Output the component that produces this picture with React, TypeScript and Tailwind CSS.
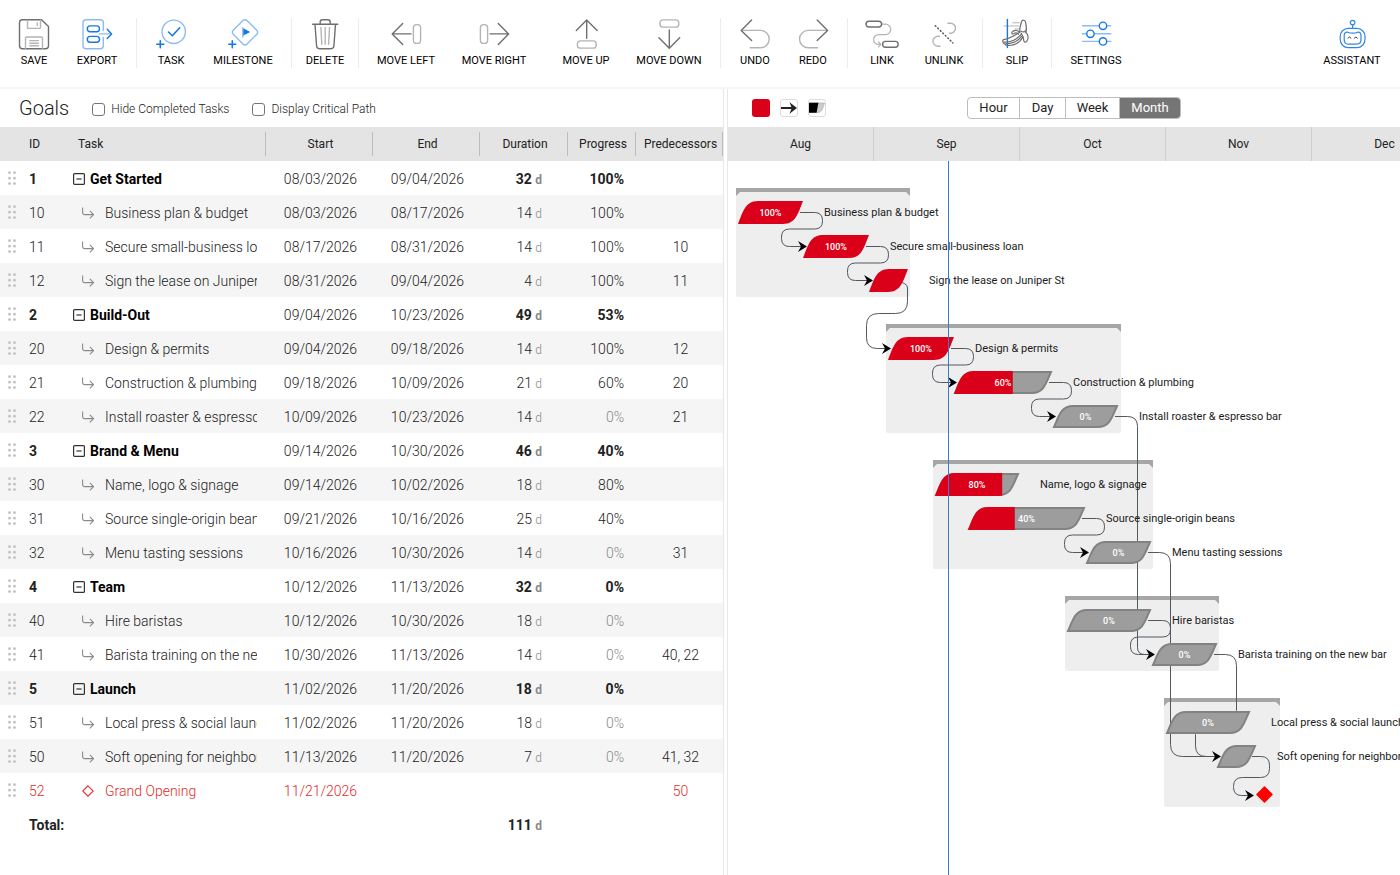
import React from 'react';

const BLUE = '#1479e6';
const LIGHT_BLUE = '#8dbbf5';
const DARK = '#6f6f6f';
const LIGHT = '#b4b4b4';

const ROW = 34;

// ---------- Toolbar icons ----------

const Icon: React.FC<{ children: React.ReactNode }> = ({ children }) => (
  <svg
    className="size-8 overflow-visible"
    viewBox="0 0 32 32"
    fill="none"
    strokeWidth="1.4"
    strokeLinecap="round"
    strokeLinejoin="round"
    aria-hidden="true"
  >
    {children}
  </svg>
);

const icons = {
  save: (
    <Icon>
      <path stroke={DARK} d="M4.5 1.8H23.5L30.5 8.5V27.8A3 3 0 0 1 27.5 30.8H4.5A3 3 0 0 1 1.5 27.8V4.8A3 3 0 0 1 4.5 1.8Z" />
      <path stroke={LIGHT} d="M9.5 2.2V9.4A1 1 0 0 0 10.5 10.4H21.5A1 1 0 0 0 22.5 9.4V2.2M19.3 5V7.4" />
      <path stroke={LIGHT} d="M7.5 30.4V20A1 1 0 0 1 8.5 19H23.5A1 1 0 0 1 24.5 20V30.4M11.8 22.6H20.4M11.8 25.2H20.4M11.8 27.8H20.4" />
    </Icon>
  ),
  exporting: (
    <Icon>
      <path stroke={LIGHT_BLUE} d="M22.3 12.5V4.8A3 3 0 0 0 19.3 1.8H5A3 3 0 0 0 2 4.8V27.8A3 3 0 0 0 5 30.8H19.3A3 3 0 0 0 22.3 27.8V19.5M18.5 15.9H29.5" />
      <rect stroke={BLUE} x="6.3" y="7.9" width="12.2" height="5.8" rx="2.9" />
      <rect stroke={BLUE} x="6.3" y="18.4" width="12.2" height="5.8" rx="2.9" />
      <path stroke={BLUE} d="M26.2 11.2L30.6 15.9L26.2 20.6" />
    </Icon>
  ),
  task: (
    <Icon>
      <circle stroke={LIGHT_BLUE} cx="18.7" cy="13.8" r="11.7" />
      <path stroke={BLUE} strokeWidth="1.6" d="M13.5 14L17.4 17.8L24.7 9.8M5.3 22.8V29.8M1.8 26.3H8.8" />
    </Icon>
  ),
  milestone: (
    <Icon>
      <path stroke={LIGHT_BLUE} d="M16 2.5Q18 0.8 20 2.5L29.8 12.3Q31.5 14.3 29.8 16.3L20 26.1Q18 27.8 16 26.1L6.2 16.3Q4.5 14.3 6.2 12.3Z" />
      <path stroke={LIGHT_BLUE} d="M15.8 9.6V19" />
      <path fill={BLUE} d="M16.3 10.2L23.2 13.9L16.3 17.4Z" />
      <path stroke={BLUE} strokeWidth="1.6" d="M5.3 22.8V29.8M1.8 26.3H8.8" />
    </Icon>
  ),
  trash: (
    <Icon>
      <path stroke={DARK} d="M3.6 6.3H28.8M11.2 6V4A2.3 2.3 0 0 1 13.5 1.8H18.9A2.3 2.3 0 0 1 21.2 4V6M6 6.5L7.6 28A3 3 0 0 0 10.5 30.7H22A3 3 0 0 0 24.9 28L26.5 6.5" />
      <path stroke={LIGHT} d="M11.9 9.5L12.8 26.3M16.2 9.5V26.3M20.5 9.5L19.6 26.3" />
    </Icon>
  ),
  left: (
    <Icon>
      <path stroke={DARK} d="M12.7 5.4L2.2 15.9L12.7 26.4M2.2 15.9H21" />
      <rect stroke={LIGHT} x="23.4" y="6.6" width="7.2" height="18.8" rx="3.2" />
    </Icon>
  ),
  right: (
    <Icon>
      <path stroke={DARK} d="M20.3 5.4L30.6 15.9L20.3 26.4M30.6 15.9H12" />
      <rect stroke={LIGHT} x="2.4" y="6.6" width="7.2" height="18.8" rx="3.2" />
    </Icon>
  ),
  up: (
    <Icon>
      <path stroke={DARK} d="M6.3 12.4L16.7 2L27.1 12.4M16.7 2V20.2" />
      <rect stroke={LIGHT} x="7.4" y="22.9" width="18.8" height="7.2" rx="3.2" />
    </Icon>
  ),
  down: (
    <Icon>
      <path stroke={DARK} d="M5.9 19.8L16.3 30.2L26.7 19.8M16.3 30.2V12" />
      <rect stroke={LIGHT} x="7" y="1.9" width="18.8" height="7.2" rx="3.2" />
    </Icon>
  ),
  undo: (
    <Icon>
      <path stroke={LIGHT} d="M3 12.4H21.5A8.7 8.7 0 0 1 21.5 29.8H11.2" />
      <path stroke={DARK} d="M12.6 2L2.2 12.4L12.6 22.6" />
    </Icon>
  ),
  redo: (
    <Icon>
      <path stroke={LIGHT} d="M29.8 12.4H11.2A8.7 8.7 0 0 0 11.2 29.8H20.6" />
      <path stroke={DARK} d="M20.2 2L30.6 12.4L20.2 22.6" />
    </Icon>
  ),
  link: (
    <Icon>
      <path stroke={LIGHT} strokeWidth="1.2" d="M16 6.2H19.5A5.2 5.2 0 0 1 19.5 16.6H12.5A4.9 4.9 0 0 0 12.5 26.4H14.6M12.6 24L15 26.4L12.6 28.8" />
      <rect stroke={DARK} x="0" y="3.2" width="15.6" height="5.8" rx="2.9" />
      <rect stroke={DARK} x="16.6" y="23.4" width="15.6" height="5.8" rx="2.9" />
    </Icon>
  ),
  unlink: (
    <Icon>
      <path stroke={LIGHT} d="M20 5.2H22.5A5 5 0 0 1 22.5 15.2H21.5M11.5 18.2H10A5 5 0 0 0 10 28.2H12" />
      <path stroke="#555" strokeWidth="1.5" strokeDasharray="0.8 2.7" d="M7.3 7.7L24.9 24.9" />
    </Icon>
  ),
  slip: (
    <Icon>
      <path stroke={LIGHT} strokeWidth="1" d="M11.8 4.8H18.5M2.8 8H17.5M14 11H18" />
      <path stroke={BLUE} d="M6.4 1.5V29.6" />
      <g stroke={DARK} strokeWidth="1.2">
        <path d="M18.8 13.5C18.2 9.5 20 6.5 20.6 3.4C21 1.8 24 1.8 24.4 3.6C25.2 7.5 26.2 10.5 24.8 14.6" />
        <path d="M20 13.2C21.6 14.2 23.4 14 24.8 12.8" />
        <path d="M18.8 14C15.5 16.5 9.5 20.6 2.4 21.6C1.6 22.4 1.8 24 2.6 25.2C4.2 26 4.4 26.6 5 27.2C12 27.8 18.5 25.5 21.8 19" />
        <path d="M3 24C10 24.4 16.5 21 20.6 15.8M5 25.6C11.5 25.8 17 23 20.6 18.4" />
        <path d="M18.8 14.2C16.5 12 13 11.8 11 14.2C10.4 15.4 11.2 16.4 12.6 15.8C14.4 14.6 16.4 15 17.4 16.2" />
        <path d="M24.8 14.4C27.4 16.5 28 20.5 25.6 23.6C24.6 24.6 23.2 24.2 22.8 22.8C22.6 20 21.8 17.6 20.2 15.4" />
      </g>
    </Icon>
  ),
  settings: (
    <Icon>
      <path stroke={LIGHT_BLUE} d="M2.5 7.8H30.8M2.5 15.8H30.8M2.5 23.4H30.8" />
      <g stroke={BLUE} fill="#fff">
        <circle cx="23" cy="7.8" r="3.7" />
        <circle cx="10.4" cy="15.8" r="3.7" />
        <circle cx="23" cy="23.4" r="3.7" />
      </g>
    </Icon>
  ),
  assistant: (
    <Icon>
      <g stroke="#2f86e4" strokeWidth="1.2">
        <circle cx="16.6" cy="4.6" r="2.3" />
        <path d="M16.6 7V10.4" />
        <rect x="4.2" y="10.4" width="24.8" height="19.2" rx="8" />
        <path d="M11.6 14.2C14 15.4 19.2 15.4 21.6 14.2C24.4 13.8 25 15.6 25 18V21.6C25 24.8 23.6 26.2 20.8 26.2H12.4C9.6 26.2 8.2 24.8 8.2 21.6V18C8.2 15.6 8.8 13.8 11.6 14.2Z" />
      </g>
      <path stroke="#444" strokeWidth="1" d="M12 20.2L13.5 19L15 20.2M18.4 20.2L19.9 19L21.4 20.2" />
    </Icon>
  ),
};

interface Tool {
  label: string;
  icon: React.ReactNode;
  width: string;
}

const toolGroups: { pad: string; tools: Tool[] }[] = [
  {
    pad: 'pr-[10px]',
    tools: [
      { label: 'SAVE', icon: icons.save, width: 'w-[68px]' },
      { label: 'EXPORT', icon: icons.exporting, width: 'w-[58px]' },
    ],
  },
  {
    pad: 'pr-[10px]',
    tools: [
      { label: 'TASK', icon: icons.task, width: 'w-[68px]' },
      { label: 'MILESTONE', icon: icons.milestone, width: 'w-[76px]' },
    ],
  },
  { pad: '', tools: [{ label: 'DELETE', icon: icons.trash, width: 'w-[66px]' }] },
  {
    pad: 'pr-[19px]',
    tools: [
      { label: 'MOVE LEFT', icon: icons.left, width: 'w-[94px]' },
      { label: 'MOVE RIGHT', icon: icons.right, width: 'w-[82px]' },
      { label: 'MOVE UP', icon: icons.up, width: 'w-[102px]' },
      { label: 'MOVE DOWN', icon: icons.down, width: 'w-[64px]' },
    ],
  },
  {
    pad: 'pr-[10px]',
    tools: [
      { label: 'UNDO', icon: icons.undo, width: 'w-[68px]' },
      { label: 'REDO', icon: icons.redo, width: 'w-[48px]' },
    ],
  },
  {
    pad: 'pr-[10px]',
    tools: [
      { label: 'LINK', icon: icons.link, width: 'w-[68px]' },
      { label: 'UNLINK', icon: icons.unlink, width: 'w-[56px]' },
    ],
  },
  { pad: '', tools: [{ label: 'SLIP', icon: icons.slip, width: 'w-[68px]' }] },
  { pad: '', tools: [{ label: 'SETTINGS', icon: icons.settings, width: 'w-[88px]' }] },
];

const ToolButton: React.FC<Tool> = ({ label, icon, width }) => (
  <button type="button" className={`${width} flex shrink-0 flex-col items-center gap-1`}>
    {icon}
    <span className="text-[11px] leading-[14px] whitespace-nowrap text-black">{label}</span>
  </button>
);

const Toolbar = () => (
  <header className="flex items-start border-b-2 border-[#f5f5f5] pt-[18px] pb-[19px]">
    {toolGroups.map((group, i) => (
      <div
        key={i}
        className={`${group.pad} flex shrink-0 ${i < toolGroups.length - 1 ? 'border-r border-[#ececec]' : ''}`}
      >
        {group.tools.map((tool) => (
          <ToolButton key={tool.label} {...tool} />
        ))}
      </div>
    ))}
    <div className="ml-auto flex">
      <ToolButton label="ASSISTANT" icon={icons.assistant} width="w-[96px]" />
    </div>
  </header>
);

// ---------- Data ----------

interface Task {
  id: string;
  name: string;
  kind: 'group' | 'task' | 'milestone';
  start: string;
  end?: string;
  days?: number;
  progress?: number;
  pred?: string;
  // chart position, x from the left edge of August
  x1: number;
  x2: number;
  // rows covered by a group
  span?: number;
}

const tasks: Task[] = [
  { id: '1', name: 'Get Started', kind: 'group', start: '08/03/2026', end: '09/04/2026', days: 32, progress: 100, x1: 8, x2: 182, span: 4 },
  { id: '10', name: 'Business plan & budget', kind: 'task', start: '08/03/2026', end: '08/17/2026', days: 14, progress: 100, x1: 10, x2: 75 },
  { id: '11', name: 'Secure small-business loan', kind: 'task', start: '08/17/2026', end: '08/31/2026', days: 14, progress: 100, pred: '10', x1: 75, x2: 141 },
  { id: '12', name: 'Sign the lease on Juniper St', kind: 'task', start: '08/31/2026', end: '09/04/2026', days: 4, progress: 100, pred: '11', x1: 141, x2: 180 },
  { id: '2', name: 'Build-Out', kind: 'group', start: '09/04/2026', end: '10/23/2026', days: 49, progress: 53, x1: 158, x2: 393, span: 4 },
  { id: '20', name: 'Design & permits', kind: 'task', start: '09/04/2026', end: '09/18/2026', days: 14, progress: 100, pred: '12', x1: 160, x2: 226 },
  { id: '21', name: 'Construction & plumbing', kind: 'task', start: '09/18/2026', end: '10/09/2026', days: 21, progress: 60, pred: '20', x1: 226, x2: 324 },
  { id: '22', name: 'Install roaster & espresso bar', kind: 'task', start: '10/09/2026', end: '10/23/2026', days: 14, progress: 0, pred: '21', x1: 325, x2: 390 },
  { id: '3', name: 'Brand & Menu', kind: 'group', start: '09/14/2026', end: '10/30/2026', days: 46, progress: 40, x1: 205, x2: 425, span: 4 },
  { id: '30', name: 'Name, logo & signage', kind: 'task', start: '09/14/2026', end: '10/02/2026', days: 18, progress: 80, x1: 207, x2: 291 },
  { id: '31', name: 'Source single-origin beans', kind: 'task', start: '09/21/2026', end: '10/16/2026', days: 25, progress: 40, x1: 240, x2: 357 },
  { id: '32', name: 'Menu tasting sessions', kind: 'task', start: '10/16/2026', end: '10/30/2026', days: 14, progress: 0, pred: '31', x1: 358, x2: 423 },
  { id: '4', name: 'Team', kind: 'group', start: '10/12/2026', end: '11/13/2026', days: 32, progress: 0, x1: 337, x2: 491, span: 3 },
  { id: '40', name: 'Hire baristas', kind: 'task', start: '10/12/2026', end: '10/30/2026', days: 18, progress: 0, x1: 339, x2: 423 },
  { id: '41', name: 'Barista training on the new bar', kind: 'task', start: '10/30/2026', end: '11/13/2026', days: 14, progress: 0, pred: '40, 22', x1: 424, x2: 489 },
  { id: '5', name: 'Launch', kind: 'group', start: '11/02/2026', end: '11/20/2026', days: 18, progress: 0, x1: 436, x2: 552, span: 4 },
  { id: '51', name: 'Local press & social launch', kind: 'task', start: '11/02/2026', end: '11/20/2026', days: 18, progress: 0, x1: 438, x2: 522 },
  { id: '50', name: 'Soft opening for neighbors', kind: 'task', start: '11/13/2026', end: '11/20/2026', days: 7, progress: 0, pred: '41, 32', x1: 489, x2: 528 },
  { id: '52', name: 'Grand Opening', kind: 'milestone', start: '11/21/2026', pred: '50', x1: 536, x2: 536 },
];

// ---------- Task table ----------

const DragHandle = () => (
  <svg className="ml-2 h-[14px] w-2" viewBox="0 0 8 14" fill="#c2c2c2" aria-hidden="true">
    {[1.7, 7.2, 12.6].map((y) => (
      <React.Fragment key={y}>
        <circle cx="1.5" cy={y} r="1.4" />
        <circle cx="6.5" cy={y} r="1.4" />
      </React.Fragment>
    ))}
  </svg>
);

const RowMark: React.FC<{ kind: Task['kind'] }> = ({ kind }) => {
  if (kind === 'group') {
    return (
      <button type="button" aria-label="Collapse group" className="mr-[5px] shrink-0">
        <svg className="size-3" viewBox="0 0 12 12" fill="none" stroke="#333" strokeWidth="1.2">
          <rect x="0.6" y="0.6" width="10.8" height="10.8" rx="1" />
          <path d="M3.4 6H8.6" />
        </svg>
      </button>
    );
  }
  if (kind === 'milestone') {
    return (
      <svg className="mr-[11px] ml-[9px] size-3 shrink-0" viewBox="0 0 12 12" fill="none" stroke="#e03a3a" strokeWidth="1.2">
        <path d="M6 0.8L11.2 6L6 11.2L0.8 6Z" />
      </svg>
    );
  }
  return (
    <svg className="mr-[11px] ml-[9px] size-3 shrink-0" viewBox="0 0 12 12" fill="none" stroke="#8a8a8a" strokeWidth="1.1">
      <path d="M0.6 0.5V5.6A2 2 0 0 0 2.6 7.6H11.4M7.8 3.8L11.6 7.6L7.8 11.4" />
    </svg>
  );
};

const HeadCell: React.FC<{ children: React.ReactNode }> = ({ children }) => (
  <th className="p-0 font-normal">
    <div className="flex h-6 items-center justify-center border-r border-[#bdbdbd] pl-[3px]">{children}</div>
  </th>
);

const TaskRow: React.FC<{ task: Task }> = ({ task }) => {
  const isGroup = task.kind === 'group';
  const isMilestone = task.kind === 'milestone';
  const weight = isGroup ? 'font-bold' : 'font-light';
  const color = isMilestone ? 'text-[#df2b2b]' : 'text-[#222]';

  return (
    <tr className={`h-[34px] even:bg-[#f5f5f5] ${color}`}>
      <td className="p-0">
        <DragHandle />
      </td>
      <td className={`p-0 pt-[2px] ${weight}`}>{task.id}</td>
      <td className="overflow-hidden p-0 pt-[2px] pr-[9px]">
        <div className={`flex items-center overflow-hidden whitespace-nowrap ${isGroup ? 'font-bold text-black' : 'font-light'}`}>
          <RowMark kind={task.kind} />
          <span className="overflow-hidden">{task.name}</span>
        </div>
      </td>
      <td className="p-0 pt-[2px] pl-[2px] text-center font-light">{task.start}</td>
      <td className="p-0 pt-[2px] pl-[2px] text-center font-light">{task.end}</td>
      <td className={`p-0 pt-[2px] pr-[26px] text-right ${weight}`}>
        {task.days !== undefined && (
          <>
            {task.days} <span className="text-xs text-[#888]">d</span>
          </>
        )}
      </td>
      <td className={`p-0 pt-[2px] pr-3 text-right ${weight} ${task.progress === 0 && !isGroup ? 'text-[#888]' : ''}`}>
        {task.progress !== undefined && `${task.progress}%`}
      </td>
      <td className="p-0 pt-[2px] pl-[2px] text-center font-light">{task.pred}</td>
    </tr>
  );
};

const CheckOption: React.FC<{ id: string; label: string }> = ({ id, label }) => (
  <div className="flex items-center gap-[6px]">
    <input
      id={id}
      type="checkbox"
      className="size-[13px] appearance-none rounded-[3px] border border-[#767676] bg-white checked:bg-[#757575]"
    />
    <label htmlFor={id} className="text-xs font-light text-[#222]">
      {label}
    </label>
  </div>
);

const TaskPanel = () => (
  <section className="w-[723px] shrink-0">
    <div className="flex h-[38px] items-center pl-[19px]">
      <h1 className="mr-[23px] text-xl font-light text-[#222]">Goals</h1>
      <div className="flex gap-[23px] pt-[2px]">
        <CheckOption id="hide-completed" label="Hide Completed Tasks" />
        <CheckOption id="critical-path" label="Display Critical Path" />
      </div>
    </div>
    <table className="w-full table-fixed border-collapse text-sm leading-5">
      <colgroup>
        <col className="w-[29px]" />
        <col className="w-[44px]" />
        <col className="w-[193px]" />
        <col className="w-[107px]" />
        <col className="w-[107px]" />
        <col className="w-[88px]" />
        <col className="w-[68px]" />
        <col className="w-[87px]" />
      </colgroup>
      <thead>
        <tr className="h-[34px] bg-[#e4e4e4] text-xs text-[#222]">
          <th className="p-0" />
          <th className="p-0 text-left font-normal">ID</th>
          <th className="p-0 font-normal">
            <div className="flex h-6 items-center border-r border-[#bdbdbd] pl-[5px]">Task</div>
          </th>
          <HeadCell>Start</HeadCell>
          <HeadCell>End</HeadCell>
          <HeadCell>Duration</HeadCell>
          <HeadCell>Progress</HeadCell>
          <HeadCell>Predecessors</HeadCell>
        </tr>
      </thead>
      <tbody>
        {tasks.map((task) => (
          <TaskRow key={task.id} task={task} />
        ))}
      </tbody>
      <tfoot>
        <tr className="h-[34px] font-bold text-[#222]">
          <td className="p-0" />
          <td className="p-0 pt-[2px]" colSpan={4}>
            Total:
          </td>
          <td className="p-0 pt-[2px] pr-[26px] text-right">
            111 <span className="text-xs text-[#888]">d</span>
          </td>
          <td className="p-0" colSpan={2} />
        </tr>
      </tfoot>
    </table>
  </section>
);

// ---------- Gantt chart ----------

type Point = [number, number];

const rowMiddle = (row: number) => row * ROW + 17;

// Polyline with rounded corners
const roundedPath = (points: Point[], radius: number) => {
  let d = `M${points[0][0]} ${points[0][1]}`;
  for (let i = 1; i < points.length - 1; i++) {
    const [px, py] = points[i - 1];
    const [x, y] = points[i];
    const [nx, ny] = points[i + 1];
    const before = Math.hypot(x - px, y - py);
    const after = Math.hypot(nx - x, ny - y);
    const r = Math.min(radius, before / 2, after / 2);
    const ax = x - ((x - px) / before) * r;
    const ay = y - ((y - py) / before) * r;
    const bx = x + ((nx - x) / after) * r;
    const by = y + ((ny - y) / after) * r;
    d += `L${ax} ${ay}Q${x} ${y} ${bx} ${by}`;
  }
  const last = points[points.length - 1];
  return `${d}L${last[0]} ${last[1]}`;
};

// Connector that leaves a bar, turns back and enters the next one from the left
const snake = (from: number, to: number): Point[] => {
  const a = tasks[from];
  const b = tasks[to];
  const y1 = rowMiddle(from) + 0.5;
  const y2 = rowMiddle(to) + 0.5;
  const mid = (y1 + y2) / 2 - 0.5;
  return [
    [a.x2 - 3, y1],
    [a.x2 + 19.5, y1],
    [a.x2 + 19.5, mid],
    [b.x1 - 21.5, mid],
    [b.x1 - 21.5, y2],
    [b.x1, y2],
  ];
};

const connectors: { points: Point[]; radius: number }[] = [
  { points: snake(1, 2), radius: 8 },
  { points: snake(2, 3), radius: 8 },
  { points: [[174, 121.5], [179.5, 124], [179.5, 152.5], [138.5, 152.5], [138.5, 187.5], [160, 187.5]], radius: 12 },
  { points: snake(5, 6), radius: 8 },
  { points: snake(6, 7), radius: 8 },
  { points: snake(10, 11), radius: 8 },
  { points: snake(13, 14), radius: 8 },
  { points: [[387, 255.5], [409.5, 255.5], [409.5, 493.5], [424, 493.5]], radius: 10 },
  { points: [[420, 391.5], [442.5, 391.5], [442.5, 595.5], [489, 595.5]], radius: 12 },
  { points: [[486, 493.5], [508.5, 493.5], [508.5, 561.5], [467.5, 561.5], [467.5, 595.5], [489, 595.5]], radius: 12 },
  { points: [[524, 595.5], [541.5, 595.5], [541.5, 616.5], [505.5, 616.5], [505.5, 634.5], [522, 634.5]], radius: 9 },
];

const arrowTips: Point[] = [
  [79, 85.5],
  [145, 119.5],
  [163, 187.5],
  [229, 221.5],
  [328, 255.5],
  [361, 391.5],
  [427, 493.5],
  [493, 595.5],
  [526, 634.5],
];

const GroupBox: React.FC<{ task: Task; row: number }> = ({ task, row }) => {
  const y = row * ROW + 27;
  const h = (task.span ?? 1) * ROW - 27;
  const { x1, x2 } = task;
  return (
    <g>
      <rect x={x1} y={y} width={x2 - x1} height={h} rx="2" fill="#eee" />
      <path d={`M${x1} ${y}H${x2}V${y + 8}L${x2 - 4} ${y + 4}H${x1 + 4}L${x1} ${y + 8}Z`} fill="#a6a6a6" />
    </g>
  );
};

const Bar: React.FC<{ task: Task; row: number }> = ({ task, row }) => {
  const { x1, x2, progress = 0 } = task;
  const top = row * ROW + 6;
  const bottom = top + 23;
  const shape = `M${x1} ${bottom}C${x1 + 5} ${top + 11} ${x1 + 7} ${top} ${x1 + 20} ${top}H${x2}C${x2 - 5} ${top + 12} ${x2 - 7} ${bottom} ${x2 - 20} ${bottom}Z`;
  const inset = `M${x1 + 1} ${bottom - 1}C${x1 + 6} ${top + 11} ${x1 + 8} ${top + 1} ${x1 + 20} ${top + 1}H${x2 - 1}C${x2 - 6} ${top + 12} ${x2 - 8} ${bottom - 1} ${x2 - 20} ${bottom - 1}Z`;
  const clipId = `done-${task.id}`;
  return (
    <g>
      {progress < 100 && <path d={inset} fill="#9d9d9d" stroke="#828282" strokeWidth="2" />}
      {progress > 0 && (
        <>
          <clipPath id={clipId}>
            <rect x={x1} y={top} width={((x2 - x1) * progress) / 100} height="23" />
          </clipPath>
          <path d={shape} fill="#db0019" clipPath={`url(#${clipId})`} />
        </>
      )}
      {x2 - x1 > 50 && (
        <text x={(x1 + x2) / 2} y={top + 15} textAnchor="middle" fill="#fff" className="text-[9px] font-medium">
          {progress}%
        </text>
      )}
    </g>
  );
};

const Chart = () => (
  <svg className="block min-h-[713px] w-full flex-1" role="img" aria-label="Gantt chart">
    {tasks.map((task, row) => task.kind === 'group' && <GroupBox key={task.id} task={task} row={row} />)}
    <g fill="none" stroke="#505860" strokeWidth="1">
      {connectors.map((c, i) => (
        <path key={i} d={roundedPath(c.points, c.radius)} />
      ))}
    </g>
    {tasks.map((task, row) => task.kind === 'task' && <Bar key={task.id} task={task} row={row} />)}
    {arrowTips.map(([x, y]) => (
      <path key={`${x}-${y}`} d={`M${x} ${y}L${x - 9} ${y - 5.5}L${x - 6} ${y}L${x - 9} ${y + 5.5}Z`} fill="#000" />
    ))}
    <path d="M536.5 626L544 633.5L536.5 641L529 633.5Z" fill="#f00" stroke="#f00" strokeWidth="1.5" strokeLinejoin="round" />
    {tasks.map(
      (task, row) =>
        task.kind === 'task' && (
          <text key={task.id} x={task.x2 + 21} y={rowMiddle(row) + 4} fill="#1c1c1c" className="text-[11px]">
            {task.name}
          </text>
        ),
    )}
    {/* today */}
    <line x1="220.5" x2="220.5" y1="0" y2="100%" stroke="#3b7cc9" strokeWidth="1" />
  </svg>
);

const months = ['Aug', 'Sep', 'Oct', 'Nov', 'Dec'];
const scales = ['Hour', 'Day', 'Week', 'Month'];
const scaleWidths = ['w-[52px]', 'w-[46px]', 'w-[54px]', 'w-[60px]'];

const ChartPanel = () => (
  <section className="flex min-w-0 flex-1 flex-col overflow-hidden">
    <div className="flex h-[38px] items-center pl-6">
      <div className="flex gap-[10px]">
        <button type="button" aria-label="Bar color" className="size-[18px] rounded-[3px] bg-[#db0019]" />
        <button type="button" aria-label="Connector style" className="size-[18px] rounded-[3px] border border-[#ddd]">
          <svg className="size-4" viewBox="0 0 16 16" aria-hidden="true">
            <path d="M0 8H12" stroke="#222" strokeWidth="2" />
            <path d="M16 8L8.5 2.2L10.8 8L8.5 13.8Z" fill="#222" />
          </svg>
        </button>
        <button type="button" aria-label="Bar shape" className="size-[18px] rounded-[3px] border border-[#ddd]">
          <svg className="size-4" viewBox="0 0 16 16" aria-hidden="true">
            <path d="M0.5 3H15.5C14 8 13 12.6 8.5 12.6H0.5Z" fill="#ccc" stroke="#aaa" strokeWidth="0.6" />
            <path d="M0 2.8H9.4L7.6 12.8H0Z" fill="#000" />
          </svg>
        </button>
      </div>
      <div className="ml-[141px] flex h-[22px] overflow-hidden rounded-[4px] border border-[#bdbdbd] text-[13px] text-[#222]">
        {scales.map((scale, i) => (
          <button
            key={scale}
            type="button"
            className={`${scaleWidths[i]} ${scale === 'Month' ? 'bg-[#757575] text-white' : 'border-r border-[#bdbdbd]'}`}
          >
            {scale}
          </button>
        ))}
      </div>
    </div>
    <div className="flex h-[34px] bg-[#e4e4e4] text-xs text-[#222]">
      {months.map((month) => (
        <div key={month} className="flex w-[146px] shrink-0 items-center justify-center border-r border-[#cfcfcf]">
          {month}
        </div>
      ))}
    </div>
    <Chart />
  </section>
);

export default function App() {
  return (
    <div className="flex min-h-screen flex-col bg-white font-['Roboto',sans-serif]">
      <Toolbar />
      <main className="flex flex-1">
        <TaskPanel />
        <div className="w-[5px] shrink-0 border-x border-[#e8e8e8]" />
        <ChartPanel />
      </main>
    </div>
  );
}
